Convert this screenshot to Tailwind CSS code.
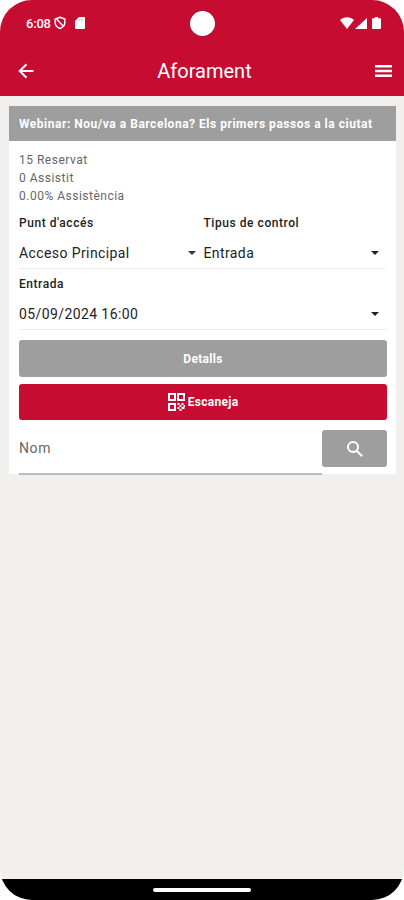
<!DOCTYPE html>
<html lang="ca">

<head>
    <meta charset="UTF-8">
    <meta name="viewport" content="width=device-width, initial-scale=1.0">
    <title>Aforament</title>
    <script src="https://cdn.jsdelivr.net/npm/@tailwindcss/browser@4"></script>
</head>

<body class="bg-white font-['Roboto',sans-serif] text-[#222]">
    <div class="w-[404px] h-[900px] flex flex-col overflow-hidden rounded-[32px] bg-[#f2f0ee]">
        <header class="h-24 shrink-0 bg-[#c60c30] text-white">
            <!-- Status bar -->
            <div class="relative h-[46px] flex items-center pl-[26px] pr-[23px]">
                <span class="w-[25px] text-[13px] leading-none font-medium tracking-[-0.2px] whitespace-nowrap">6:08</span>
                <svg class="ml-[3px] w-3 h-[14px]" viewBox="0 0 12 14" fill="none" stroke="#fff" stroke-width="1.5">
                    <path d="M6 1.2 10.8 3v3.6c0 2.700-2 5-4.800 5.900C3.200 11.600 1.200 9.300 1.200 6.600V3z" />
                    <path d="M2.500 3 9.300 10.300" />
                </svg>
                <svg class="ml-[9px] w-[10px] h-3" viewBox="0 0 10 12" fill="#fff">
                    <path d="M4 0h5a1 1 0 0 1 1 1v10a1 1 0 0 1-1 1H1a1 1 0 0 1-1-1V4z" />
                    <path d="M4.200 2v2M6 2v2M7.800 2v2" stroke="#e8a0ac" stroke-width=".7" />
                </svg>
                <div class="absolute left-[190px] top-[11px] w-[25px] h-[25px] rounded-full bg-white ring-1 ring-[#8c2038]/60"></div>
                <svg class="ml-auto w-[14px] h-3" viewBox="0 0 14 12" fill="#fff">
                    <path d="M0 2.900C4 -.7 10 -.7 14 2.900L7 12z" />
                </svg>
                <svg class="ml-px w-3 h-[11px]" viewBox="0 0 12 11" fill="#fff">
                    <path d="M12 0v11H0z" />
                </svg>
                <svg class="ml-[5px] w-[9px] h-3" viewBox="0 0 9 12" fill="#fff">
                    <path d="M3 0h3v1.200h2a1 1 0 0 1 1 1V11a1 1 0 0 1-1 1H1a1 1 0 0 1-1-1V2.200a1 1 0 0 1 1-1h2z" />
                </svg>
            </div>
            <!-- Toolbar -->
            <div class="h-[50px] flex items-center justify-between pl-[18px] pr-3">
                <svg class="w-4 h-4" viewBox="0 0 16 16" fill="none" stroke="#fff" stroke-width="2">
                    <path d="M15.500 8H2M8.500 1.200 1.700 8l6.800 6.800" />
                </svg>
                <h1 class="text-[20px] leading-none">Aforament</h1>
                <svg class="w-[17px] h-4" viewBox="0 0 17 16" stroke="#fff" stroke-width="2.5">
                    <path d="M0 3.200h17M0 8h17M0 12.800h17" />
                </svg>
            </div>
        </header>

        <main class="flex-1">
            <div class="mt-[10px] ml-[9px] w-[387px] h-[368px] bg-white">
                <h2 class="h-[35px] pl-[10px] bg-[#9e9e9e] text-white text-xs leading-[36px] font-bold tracking-[0.52px] whitespace-nowrap">Webinar: Nou/va a Barcelona? Els primers passos a la ciutat</h2>

                <div class="px-[10px]">
                    <div class="pt-[10px] text-xs leading-[18px] tracking-[0.5px] text-[#666]">
                        <p>15 Reservat</p>
                        <p>0 Assistit</p>
                        <p>0.00% Assistència</p>
                    </div>

                    <div class="mt-2 grid grid-cols-2 text-xs leading-[20px] font-medium tracking-[0.55px]">
                        <span>Punt d'accés</span>
                        <span class="pl-px">Tipus de control</span>
                    </div>
                    <div class="h-[36px] pt-1 grid grid-cols-2 border-b border-[#eee] text-sm leading-none tracking-[0.4px]">
                        <div class="flex items-center justify-between">
                            Acceso Principal
                            <svg class="mr-[7px] w-2 h-1" viewBox="0 0 8 4"><path d="M0 0h8L4 4z" fill="#333" /></svg>
                        </div>
                        <div class="pl-px flex items-center justify-between">
                            Entrada
                            <svg class="mr-[7px] w-2 h-1" viewBox="0 0 8 4"><path d="M0 0h8L4 4z" fill="#222" /></svg>
                        </div>
                    </div>

                    <div class="mt-[5px] text-xs leading-[20px] font-medium tracking-[0.55px]">Entrada</div>
                    <div class="h-[36px] pt-1 flex items-center justify-between border-b border-[#eee] text-sm leading-none tracking-[0.4px]">
                        05/09/2024 16:00
                        <svg class="mr-[7px] w-2 h-1" viewBox="0 0 8 4"><path d="M0 0h8L4 4z" fill="#222" /></svg>
                    </div>

                    <button type="button" class="mt-[10px] w-[368px] h-[37px] flex items-center justify-center rounded-[3px] bg-[#9e9e9e] text-white text-xs font-bold tracking-[0.3px]">Detalls</button>
                    <button type="button" class="mt-[7px] w-[368px] h-9 flex items-center justify-center gap-[3px] rounded-[3px] bg-[#c60c30] text-white text-xs font-bold tracking-[0.3px]">
                        <svg class="w-[17px] h-[18px]" viewBox="0 0 17 18" fill="none" stroke="#fff" stroke-width="2">
                            <path d="M1 1h6v6H1zM10 1h6v6h-6zM1 11h6v6H1z" />
                            <path d="M9.500 11h2M13.500 11h2M11.500 13h2M9.500 15h2M13.500 15h3M11.500 17h2M15.500 13h1.500" />
                        </svg>
                        Escaneja
                    </button>

                    <div class="mt-[10px] w-[368px] flex">
                        <div class="w-[303px] h-[45px] border-b-2 border-[#bbb] text-sm leading-[37px] tracking-[0.6px] text-[#666]">Nom</div>
                        <button type="button" class="w-[65px] h-[37px] flex items-center justify-center rounded-[3px] bg-[#9e9e9e]">
                            <svg class="w-[18px] h-[18px]" viewBox="0 0 18 18" fill="none" stroke="#fff" stroke-width="2">
                                <circle cx="7" cy="7" r="5" />
                                <path d="m10.700 10.700 5.500 5.500" />
                            </svg>
                        </button>
                    </div>
                </div>
            </div>
        </main>

        <!-- System navigation -->
        <nav class="h-[21px] shrink-0 flex justify-center bg-black">
            <div class="mt-[9px] w-[98px] h-1 rounded-full bg-white"></div>
        </nav>
    </div>
</body>

</html>
